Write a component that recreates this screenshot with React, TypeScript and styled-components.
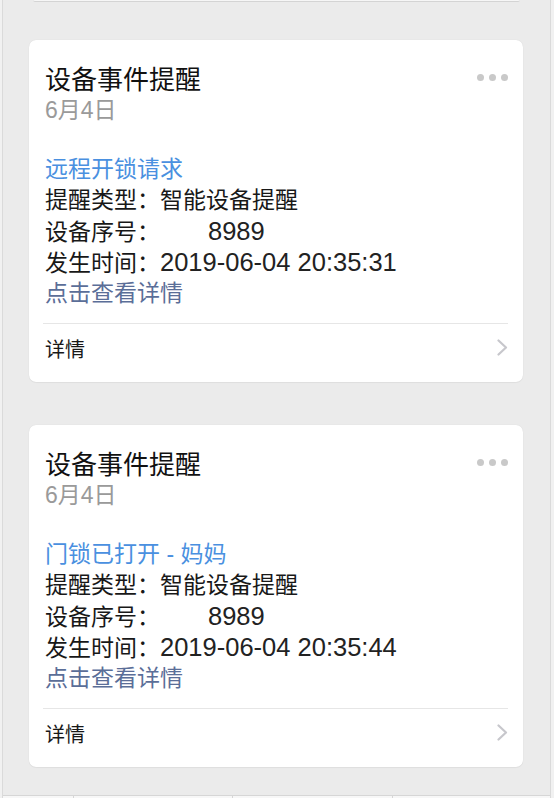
import React from "react";
import styled, { createGlobalStyle } from "styled-components";

const Global = createGlobalStyle`
  html, body {
    margin: 0;
    padding: 0;
    background: #f1f1f1;
  }
  body {
    font-family: "Liberation Sans", "Noto Sans CJK SC", sans-serif;
    -webkit-font-smoothing: antialiased;
  }
`;

const Page = styled.div`
  width: 547px;
  height: 798px;
  margin-left: 2px;
  border-left: 1px solid #dadada;
  border-right: 1px solid #dadada;
  background: #ebebeb;
  display: flex;
  flex-direction: column;
  overflow: hidden;
`;

const PrevCardEdge = styled.div`
  height: 1px;
  margin: 0 30px;
  background: #f6f6f6;
  border-bottom: 1px solid #d4d4d4;
  border-radius: 0 0 4px 4px;
  flex-shrink: 0;
`;

const Feed = styled.div`
  display: flex;
  flex-direction: column;
  gap: 43px;
  margin: 38px 27px 0 26px;
  flex-shrink: 0;
`;

const Card = styled.article`
  background: #ffffff;
  border-radius: 7px;
  box-shadow: 0 0 1px rgba(0, 0, 0, 0.12), 0 1px 1px rgba(0, 0, 0, 0.04);
  display: flex;
  flex-direction: column;
  height: 342px;
  box-sizing: border-box;
  padding-bottom: 6px;
`;

const Body = styled.div`
  padding: 24px 15px 14px 16px;
  display: flex;
  flex-direction: column;
`;

const Header = styled.div`
  display: flex;
  justify-content: space-between;
  align-items: flex-start;
`;

const Title = styled.h2`
  margin: 0;
  font-size: 26px;
  line-height: 32px;
  font-weight: 400;
  color: #111111;
`;

const Dots = styled.div`
  display: flex;
  gap: 5px;
  margin-top: 10px;
`;

const Dot = styled.span`
  width: 7px;
  height: 7px;
  border-radius: 50%;
  background: #c9c9c9;
`;

const DateText = styled.div`
  font-size: 23px;
  line-height: 28px;
  color: #9a9a9a;
`;

const Lines = styled.div`
  margin-top: 30px;
  display: flex;
  flex-direction: column;
`;

const Line = styled.div<{ $tone?: "blue" | "link" | "text" }>`
  height: 31px;
  font-size: 23px;
  line-height: 31px;
  white-space: nowrap;
  color: ${(p) =>
    p.$tone === "blue" ? "#4a90e0" : p.$tone === "link" ? "#5b6e98" : "#181818"};
`;

const Num = styled.span<{ $indent?: number }>`
  font-family: "Liberation Sans", sans-serif;
  font-size: 25.5px;
  line-height: 31px;
  margin-left: ${(p) => p.$indent ?? 0}px;
  color: #222222;
`;

const Divider = styled.div`
  height: 1px;
  background: #e6e6e6;
  margin: 0 15px 0 14px;
`;

const Footer = styled.div`
  height: 52px;
  display: flex;
  align-items: center;
  justify-content: space-between;
  padding: 0 15px 0 16px;
`;

const FooterLabel = styled.span`
  font-size: 20px;
  color: #181818;
  margin-top: -4px;
`;

const Chevron = styled.svg`
  width: 11px;
  height: 17px;
  margin-top: -6px;
`;

const TabBar = styled.div`
  margin-top: 28px;
  height: 50px;
  flex-shrink: 0;
  background: #f7f7f7;
  border-top: 1px solid #d6d6d6;
  display: grid;
  grid-template-columns: 70px 159px 160px 1fr;
`;

const TabCell = styled.div<{ $first?: boolean }>`
  border-left: ${(p) => (p.$first ? "none" : "1px solid #d6d6d6")};
`;

type Item = {
  subject: string;
  time: string;
};

const items: Item[] = [
  { subject: "远程开锁请求", time: "2019-06-04 20:35:31" },
  { subject: "门锁已打开 - 妈妈", time: "2019-06-04 20:35:44" },
];

function EventCard({ item }: { item: Item }) {
  return (
    <Card>
      <Body>
        <Header>
          <Title>设备事件提醒</Title>
          <Dots>
            <Dot />
            <Dot />
            <Dot />
          </Dots>
        </Header>
        <DateText>6月4日</DateText>
        <Lines>
          <Line $tone="blue">{item.subject}</Line>
          <Line>提醒类型：智能设备提醒</Line>
          <Line>
            设备序号：<Num $indent={48}>8989</Num>
          </Line>
          <Line>
            发生时间：<Num>{item.time}</Num>
          </Line>
          <Line $tone="link">点击查看详情</Line>
        </Lines>
      </Body>
      <Divider />
      <Footer>
        <FooterLabel>详情</FooterLabel>
        <Chevron viewBox="0 0 11 17">
          <polyline
            points="1.5,1.5 9,8.5 1.5,15.5"
            fill="none"
            stroke="#c7c7cc"
            strokeWidth="2.2"
            strokeLinecap="round"
            strokeLinejoin="round"
          />
        </Chevron>
      </Footer>
    </Card>
  );
}

export default function App() {
  return (
    <>
      <Global />
      <Page>
        <PrevCardEdge />
        <Feed>
          {items.map((it) => (
            <EventCard key={it.time} item={it} />
          ))}
        </Feed>
        <TabBar>
          <TabCell $first />
          <TabCell />
          <TabCell />
          <TabCell />
        </TabBar>
      </Page>
    </>
  );
}
